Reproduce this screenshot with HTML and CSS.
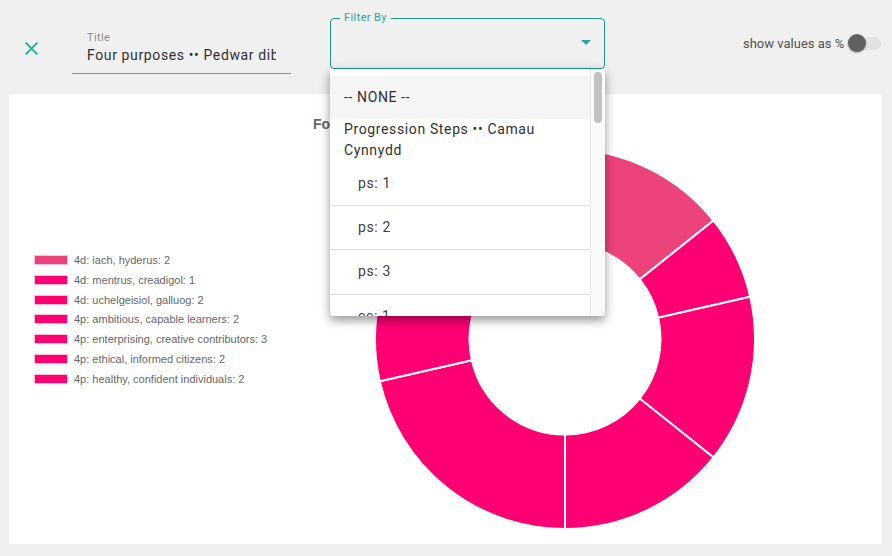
FILE: index.html
```html
<!DOCTYPE html>
<html lang="en">
<head>
    <meta charset="UTF-8">
    <title>Chart</title>
    <link rel="stylesheet" href="styles.css">
</head>
<body>
    <div class="toolbar">
        <button class="close-button" aria-label="Close">
            <svg width="13" height="13" viewBox="0 0 13 13"><path d="M0.6 0.6 L12.4 12.4 M12.4 0.6 L0.6 12.4" fill="none" stroke="#26a69a" stroke-width="1.8"/></svg>
        </button>

        <div class="title-field">
            <label>Title</label>
            <div class="title-value">Four purposes •• Pedwar diben</div>
        </div>

        <div class="filter">
            <fieldset class="filter-box">
                <legend>Filter By</legend>
                <span class="arrow"></span>
            </fieldset>

            <div class="menu">
                <div class="menu-list">
                    <div class="option active">-- NONE --</div>
                    <div class="group-label">Progression Steps •• Camau Cynnydd</div>
                    <div class="option sub">ps: 1</div>
                    <div class="option sub">ps: 2</div>
                    <div class="option sub">ps: 3</div>
                    <div class="option sub">cc: 1</div>
                </div>
                <div class="menu-scroll"><div class="menu-thumb"></div></div>
            </div>
        </div>

        <div class="toggle">
            <span>show values as %</span>
            <div class="switch"><div class="switch-thumb"></div></div>
        </div>
    </div>

    <div class="card">
        <div class="chart-title">Four purposes •• Pedwar diben</div>

        <ul class="legend">
            <li><span class="swatch first"></span>4d: iach, hyderus: 2</li>
            <li><span class="swatch"></span>4d: mentrus, creadigol: 1</li>
            <li><span class="swatch"></span>4d: uchelgeisiol, galluog: 2</li>
            <li><span class="swatch"></span>4p: ambitious, capable learners: 2</li>
            <li><span class="swatch"></span>4p: enterprising, creative contributors: 3</li>
            <li><span class="swatch"></span>4p: ethical, informed citizens: 2</li>
            <li><span class="swatch"></span>4p: healthy, confident individuals: 2</li>
        </ul>

        <svg class="donut" width="380" height="380" viewBox="0 0 378 378">
            <g stroke="#fff" stroke-width="2">
                <path fill="#ed437b" d="M189 0 A189 189 0 0 1 336.76 71.16 L263.27 129.76 A95 95 0 0 0 189 94 Z"/>
                <path fill="#ff0073" d="M336.76 71.16 A189 189 0 0 1 373.26 146.95 L281.62 167.86 A95 95 0 0 0 263.27 129.76 Z"/>
                <path fill="#ff0073" d="M373.26 146.95 A189 189 0 0 1 336.76 306.84 L263.27 248.24 A95 95 0 0 0 281.62 167.86 Z"/>
                <path fill="#ff0073" d="M336.76 306.84 A189 189 0 0 1 189 378 L189 284 A95 95 0 0 0 263.27 248.24 Z"/>
                <path fill="#ff0073" d="M189 378 A189 189 0 0 1 4.74 231.05 L96.38 210.14 A95 95 0 0 0 189 284 Z"/>
                <path fill="#ff0073" d="M4.74 231.05 A189 189 0 0 1 41.24 71.16 L114.73 129.76 A95 95 0 0 0 96.38 210.14 Z"/>
                <path fill="#ff0073" d="M41.24 71.16 A189 189 0 0 1 189 0 L189 94 A95 95 0 0 0 114.73 129.76 Z"/>
            </g>
        </svg>
    </div>
</body>
</html>
```

FILE: styles.css
```css
body {
    margin: 0;
    height: 556px;
    overflow: hidden;
    background-color: #f0f0f0;
    font-family: Roboto, sans-serif;
    color: #303030;
}

.toolbar {
    display: flex;
    height: 94px;
}

.close-button {
    width: 13px;
    height: 13px;
    margin: 42px 0 0 25px;
    padding: 0;
    border: none;
    background: none;
}

.title-field {
    width: 219px;
    height: 73px;
    margin-left: 34px;
    border-bottom: 1px solid #8c8c8c;
}

.title-field label {
    display: block;
    margin: 31px 0 0 15px;
    font-size: 11px;
    line-height: 14px;
    letter-spacing: 0.4px;
    color: #8a8a8a;
}

.title-value {
    width: 189px;
    margin: 0 0 0 15px;
    overflow: hidden;
    white-space: nowrap;
    font-size: 14px;
    line-height: 20px;
    letter-spacing: 0.62px;
}

.filter {
    position: relative;
    width: 275px;
    margin-left: 39px;
}

.filter-box {
    position: relative;
    height: 57px;
    margin: 12px 0 0;
    padding: 0 0 0 9px;
    box-sizing: border-box;
    border: 1px solid #1b9c8b;
    border-radius: 4px;
}

.filter-box legend {
    padding: 0 4px;
    font-size: 11px;
    line-height: 12px;
    letter-spacing: 0.4px;
    color: #26a69a;
}

.arrow {
    position: absolute;
    top: 16px;
    right: 13px;
    width: 0;
    height: 0;
    border-left: 5px solid transparent;
    border-right: 5px solid transparent;
    border-top: 5px solid #26a69a;
}

.menu {
    position: absolute;
    top: 69px;
    left: 0;
    z-index: 2;
    display: flex;
    width: 275px;
    height: 247px;
    overflow: hidden;
    background-color: white;
    border-radius: 0 0 4px 4px;
    box-shadow: 0 5px 8px rgba(0, 0, 0, 0.3), 0 2px 14px rgba(0, 0, 0, 0.14);
}

.menu-list {
    flex: 1;
    padding-top: 7px;
    overflow: hidden;
    font-size: 14px;
    letter-spacing: 0.63px;
}

.option {
    height: 43px;
    padding-left: 14px;
    line-height: 43px;
}

.option.active {
    background-color: #f5f5f5;
}

.option.sub {
    height: 43.2px;
    padding-left: 28px;
    line-height: 43px;
    border-bottom: 1px solid #dedede;
    color: #404040;
}

.group-label {
    padding: 0 14px 1px;
    line-height: 21px;
}

.menu-scroll {
    width: 14px;
    padding-top: 3px;
    background-color: #fafafa;
    border-left: 1px solid #e8e8e8;
}

.menu-thumb {
    width: 8px;
    height: 51px;
    margin-left: 3px;
    background-color: #c1c1c1;
    border-radius: 4px;
}

.toggle {
    display: flex;
    align-items: center;
    height: 18px;
    margin: 34px 0 0 138px;
    font-size: 13px;
    color: #505050;
}

.switch {
    position: relative;
    width: 34px;
    height: 13px;
    margin-left: 3px;
    background-color: #e2e2e2;
    border-radius: 7px;
}

.switch-thumb {
    position: absolute;
    top: -3px;
    left: 1px;
    width: 18px;
    height: 18px;
    background-color: #616161;
    border-radius: 50%;
    box-shadow: 0 1px 2px rgba(0, 0, 0, 0.3);
}

.card {
    display: grid;
    grid-template-columns: 365.5px 380px;
    grid-template-rows: 55px 380px;
    height: 450px;
    margin: 0 10px 0 9px;
    background-color: white;
}

.chart-title {
    grid-column: 1 / 3;
    grid-row: 1;
    margin: 21px 0 0 304px;
    font-family: "Liberation Sans", sans-serif;
    font-size: 14px;
    line-height: 18px;
    font-weight: bold;
    color: #666;
}

.legend {
    grid-column: 1;
    grid-row: 1 / 3;
    align-self: center;
    margin: 16px 0 0;
    padding: 0 0 0 25px;
    list-style: none;
    font-family: "Liberation Sans", sans-serif;
    font-size: 11px;
    color: #666;
}

.legend li {
    display: flex;
    align-items: center;
    height: 19.8px;
}

.swatch {
    width: 32px;
    height: 8px;
    margin-right: 6px;
    background-color: #ff0073;
    border: 1px solid #ffc0dc;
}

.swatch.first {
    background-color: #ed437b;
}

.donut {
    grid-column: 2;
    grid-row: 2;
}
```
